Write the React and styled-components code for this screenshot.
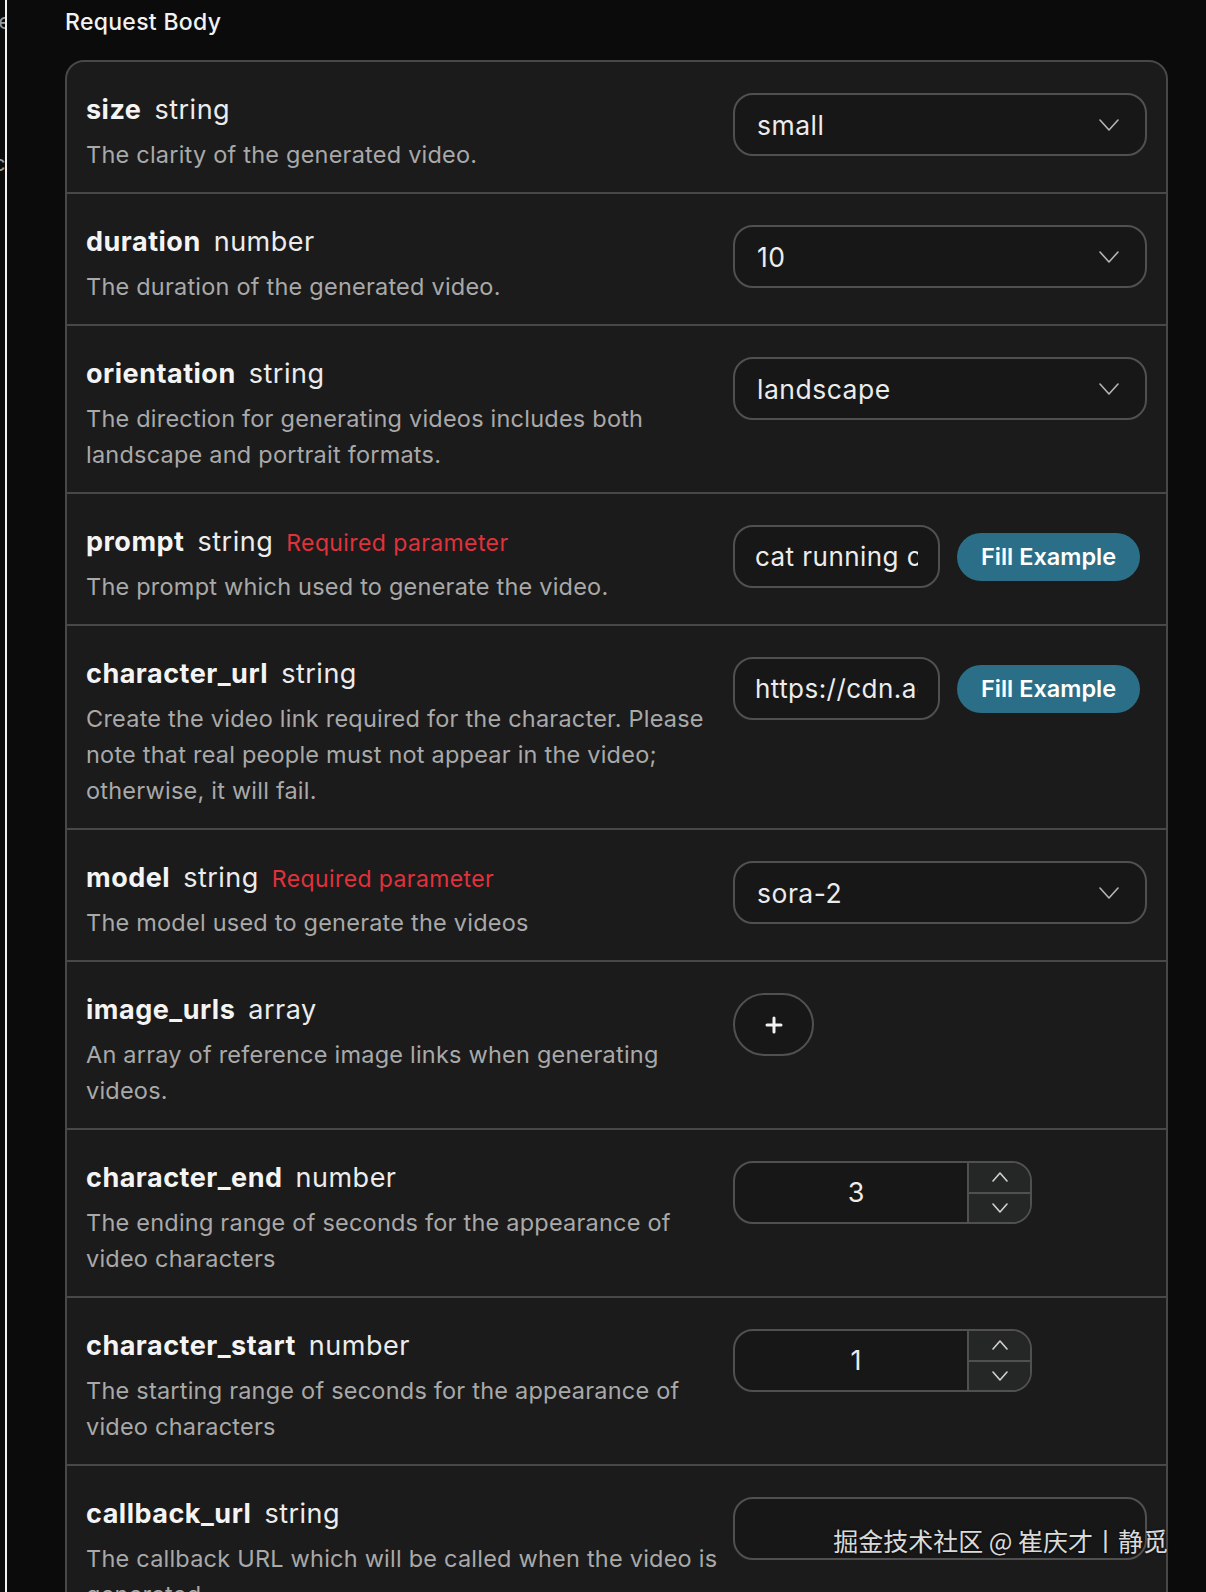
import React from "react";
import styled, { createGlobalStyle } from "styled-components";

const GlobalStyle = createGlobalStyle`
  html, body {
    margin: 0;
    padding: 0;
    background: #0b0b0b;
  }
  body {
    font-family: Inter, "Noto Sans", "Noto Sans CJK SC", sans-serif;
    -webkit-font-smoothing: antialiased;
  }
  * { box-sizing: border-box; }
`;

const Page = styled.div`
  position: relative;
  display: flex;
  width: 1206px;
  min-height: 1592px;
  background: #0b0b0b;
  overflow: hidden;
`;

const SideEdge = styled.div`
  width: 7px;
  flex: none;
  border-right: 2px solid #f2f2f2;
  overflow: hidden;
  display: flex;
  flex-direction: column;
  align-items: flex-end;
  padding-top: 6px;
  gap: 112px;
`;

const EdgeText = styled.span`
  display: block;
  font-size: 22px;
  line-height: 30px;
  color: #9a9a9a;
  white-space: nowrap;
  margin-right: -6px;
`;

const Main = styled.main`
  flex: 1;
  padding: 8px 38px 0 58px;
`;

const Heading = styled.h2`
  margin: 0 0 24px 0;
  font-size: 23px;
  line-height: 28px;
  font-weight: 500;
  color: #f2f2f2;
  letter-spacing: 0.3px;
`;

const Card = styled.section`
  border: 2px solid #484848;
  border-radius: 19px;
  background: #1b1b1b;
  overflow: hidden;
`;

const Row = styled.div`
  display: grid;
  grid-template-columns: 1fr 414px;
  column-gap: 20px;
  padding: 30px 19px 19px 19px;
  & + & {
    border-top: 2px solid #484848;
  }
`;

const Info = styled.div`
  min-width: 0;
`;

const TitleLine = styled.div`
  display: flex;
  align-items: baseline;
  gap: 13px;
  height: 36px;
  line-height: 36px;
  white-space: nowrap;
`;

const Name = styled.span`
  font-size: 27px;
  font-weight: 700;
  color: #f4f4f4;
  letter-spacing: 0.5px;
`;

const Type = styled.span`
  font-size: 27px;
  font-weight: 400;
  color: #ececec;
  letter-spacing: 0.5px;
`;

const Required = styled.span`
  font-size: 23px;
  font-weight: 400;
  color: #e0323c;
  letter-spacing: 0.4px;
`;

const Desc = styled.p`
  margin: 9px 0 0 0;
  font-size: 23.5px;
  line-height: 36px;
  color: #a9a9a9;
  letter-spacing: 0.22px;
`;

const DescLine = styled.span`
  display: block;
  white-space: nowrap;
`;

const Control = styled.div`
  align-self: start;
  display: flex;
  align-items: center;
  padding-top: 1px;
`;

const Select = styled.div`
  width: 100%;
  height: 63px;
  border: 2px solid #505050;
  border-radius: 20px;
  background: #171717;
  display: flex;
  align-items: center;
  justify-content: space-between;
  padding: 0 26px 0 22px;
  font-size: 26.5px;
  color: #ececec;
  letter-spacing: 0.5px;
`;

const TextInput = styled.input`
  width: ${(p) => (p.$half ? "50%" : "100%")};
  height: 63px;
  border: 2px solid #505050;
  border-radius: 20px;
  background: #171717;
  padding: 0 20px;
  font-family: inherit;
  font-size: 26px;
  color: #ececec;
  letter-spacing: 0.45px;
  outline: none;
  flex: none;
`;

const FillButton = styled.button`
  margin-left: 17px;
  height: 48px;
  padding: 0 24px;
  border: none;
  border-radius: 24px;
  background: #2a6f87;
  color: #ffffff;
  font-family: inherit;
  font-size: 23.5px;
  font-weight: 600;
  letter-spacing: 0;
  white-space: nowrap;
`;

const AddButton = styled.button`
  width: 81px;
  height: 63px;
  border: 2px solid #505050;
  border-radius: 32px;
  background: #171717;
  display: flex;
  align-items: center;
  justify-content: center;
  padding: 0;
`;

const NumberBox = styled.div`
  width: 299px;
  height: 63px;
  border: 2px solid #505050;
  border-radius: 20px;
  background: #171717;
  display: flex;
  overflow: hidden;
`;

const NumberValue = styled.div`
  flex: 1;
  display: flex;
  align-items: center;
  justify-content: center;
  padding-left: 10px;
  font-size: 27px;
  color: #ececec;
`;

const Steppers = styled.div`
  width: 63px;
  border-left: 2px solid #505050;
  background: #252626;
  display: flex;
  flex-direction: column;
`;

const Step = styled.div`
  flex: 1;
  display: flex;
  align-items: center;
  justify-content: center;
  & + & {
    border-top: 2px solid #505050;
  }
`;

const Watermark = styled.div`
  position: absolute;
  right: 38px;
  top: 1523px;
  font-family: "Noto Sans CJK SC", "Noto Sans", sans-serif;
  font-size: 25px;
  line-height: 34px;
  color: #dadada;
  text-shadow: 0 0 3px rgba(0, 0, 0, 0.7);
  white-space: nowrap;
`;

const Chevron = ({ up, w = 20, h = 10, color = "#b5b5b5" }) => (
  <svg width={w} height={h + 2} viewBox={`0 0 ${w} ${h + 2}`} fill="none">
    <path
      d={up ? `M1 ${h + 1} L${w / 2} 1 L${w - 1} ${h + 1}` : `M1 1 L${w / 2} ${h + 1} L${w - 1} 1`}
      stroke={color}
      strokeWidth="1.6"
      strokeLinecap="round"
      strokeLinejoin="round"
    />
  </svg>
);

const Plus = () => (
  <svg width="18" height="18" viewBox="0 0 18 18">
    <path d="M9 2 V16 M2 9 H16" stroke="#f2f2f2" strokeWidth="3" strokeLinecap="round" />
  </svg>
);

const params = [
  { name: "size", type: "string", desc: ["The clarity of the generated video."], control: { kind: "select", value: "small" } },
  { name: "duration", type: "number", desc: ["The duration of the generated video."], control: { kind: "select", value: "10" } },
  {
    name: "orientation",
    type: "string",
    desc: ["The direction for generating videos includes both", "landscape and portrait formats."],
    control: { kind: "select", value: "landscape" },
  },
  {
    name: "prompt",
    type: "string",
    required: true,
    desc: ["The prompt which used to generate the video."],
    control: { kind: "fill", value: "cat running on the grass" },
  },
  {
    name: "character_url",
    type: "string",
    desc: [
      "Create the video link required for the character. Please",
      "note that real people must not appear in the video;",
      "otherwise, it will fail.",
    ],
    control: { kind: "fill", value: "https://cdn.acedata.cloud/video.mp4" },
  },
  {
    name: "model",
    type: "string",
    required: true,
    desc: ["The model used to generate the videos"],
    control: { kind: "select", value: "sora-2" },
  },
  {
    name: "image_urls",
    type: "array",
    desc: ["An array of reference image links when generating", "videos."],
    control: { kind: "add" },
  },
  {
    name: "character_end",
    type: "number",
    desc: ["The ending range of seconds for the appearance of", "video characters"],
    control: { kind: "number", value: 3 },
  },
  {
    name: "character_start",
    type: "number",
    desc: ["The starting range of seconds for the appearance of", "video characters"],
    control: { kind: "number", value: 1 },
  },
  {
    name: "callback_url",
    type: "string",
    desc: ["The callback URL which will be called when the video is", "generated."],
    control: { kind: "text", value: "" },
  },
];

function ParamControl({ control }) {
  switch (control.kind) {
    case "select":
      return (
        <Select>
          <span>{control.value}</span>
          <Chevron />
        </Select>
      );
    case "fill":
      return (
        <>
          <TextInput $half readOnly value={control.value} />
          <FillButton>Fill Example</FillButton>
        </>
      );
    case "add":
      return (
        <AddButton aria-label="add">
          <Plus />
        </AddButton>
      );
    case "number":
      return (
        <NumberBox>
          <NumberValue>{control.value}</NumberValue>
          <Steppers>
            <Step>
              <Chevron up w={16} h={8} color="#d0d0d0" />
            </Step>
            <Step>
              <Chevron w={16} h={8} color="#d0d0d0" />
            </Step>
          </Steppers>
        </NumberBox>
      );
    default:
      return <TextInput readOnly value={control.value} />;
  }
}

export default function App() {
  return (
    <>
      <GlobalStyle />
      <Page>
        <SideEdge>
          <EdgeText>Ge</EdgeText>
          <EdgeText>ci</EdgeText>
        </SideEdge>
        <Main>
          <Heading>Request Body</Heading>
          <Card>
            {params.map((p) => (
              <Row key={p.name}>
                <Info>
                  <TitleLine>
                    <Name>{p.name}</Name>
                    <Type>{p.type}</Type>
                    {p.required && <Required>Required parameter</Required>}
                  </TitleLine>
                  <Desc>
                    {p.desc.map((line) => (
                      <DescLine key={line}>{line}</DescLine>
                    ))}
                  </Desc>
                </Info>
                <Control>
                  <ParamControl control={p.control} />
                </Control>
              </Row>
            ))}
          </Card>
        </Main>
        <Watermark>掘金技术社区 @ 崔庆才丨静觅</Watermark>
      </Page>
    </>
  );
}
